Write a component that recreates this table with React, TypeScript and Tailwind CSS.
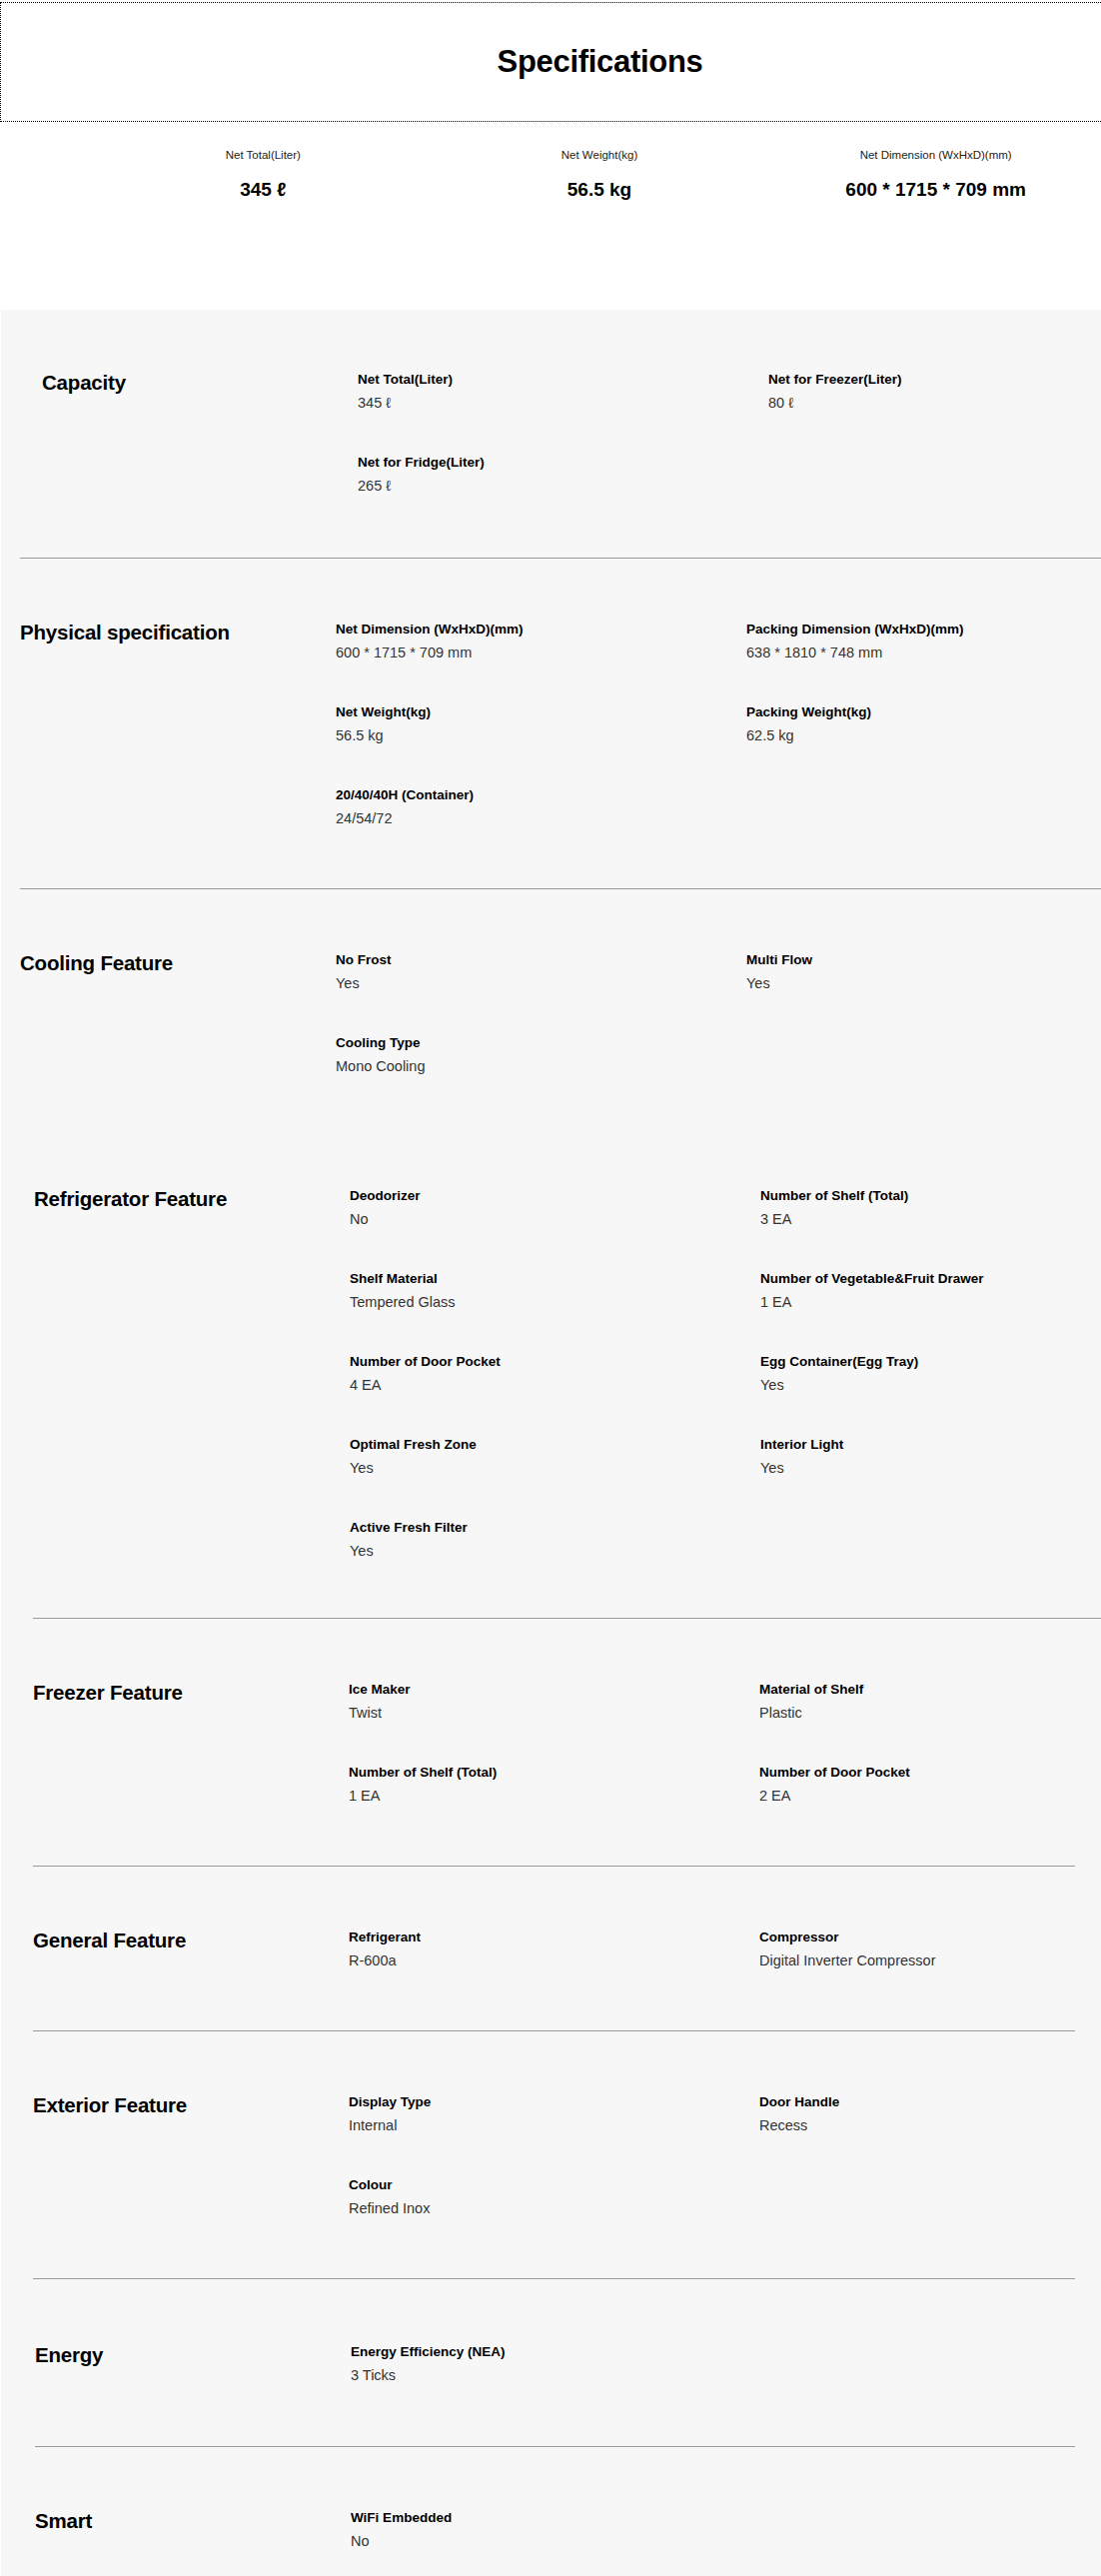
import React from 'react';

type Spec = [string, string];

type Section = {
  title: string;
  items: Spec[];
  wrap: string;
  line?: string;
};

const STATS: Spec[] = [
  ['Net Total(Liter)', '345 ℓ'],
  ['Net Weight(kg)', '56.5 kg'],
  ['Net Dimension (WxHxD)(mm)', '600 * 1715 * 709 mm'],
];

const SECTIONS: Section[] = [
  {
    title: 'Capacity',
    items: [
      ['Net Total(Liter)', '345 ℓ'],
      ['Net for Freezer(Liter)', '80 ℓ'],
      ['Net for Fridge(Liter)', '265 ℓ'],
    ],
    wrap: 'pl-[41px] pt-[60px] pb-[62px]',
    line: 'ml-[19px]',
  },
  {
    title: 'Physical specification',
    items: [
      ['Net Dimension (WxHxD)(mm)', '600 * 1715 * 709 mm'],
      ['Packing Dimension (WxHxD)(mm)', '638 * 1810 * 748 mm'],
      ['Net Weight(kg)', '56.5 kg'],
      ['Packing Weight(kg)', '62.5 kg'],
      ['20/40/40H (Container)', '24/54/72'],
    ],
    wrap: 'pl-[19px] pt-[61px] pb-[60px]',
    line: 'ml-[19px]',
  },
  {
    title: 'Cooling Feature',
    items: [
      ['No Frost', 'Yes'],
      ['Multi Flow', 'Yes'],
      ['Cooling Type', 'Mono Cooling'],
    ],
    wrap: 'pl-[19px] pt-[61px] pb-[60px]',
  },
  {
    title: 'Refrigerator Feature',
    items: [
      ['Deodorizer', 'No'],
      ['Number of Shelf (Total)', '3 EA'],
      ['Shelf Material', 'Tempered Glass'],
      ['Number of Vegetable&Fruit Drawer', '1 EA'],
      ['Number of Door Pocket', '4 EA'],
      ['Egg Container(Egg Tray)', 'Yes'],
      ['Optimal Fresh Zone', 'Yes'],
      ['Interior Light', 'Yes'],
      ['Active Fresh Filter', 'Yes'],
    ],
    wrap: 'pl-[33px] pt-[50px] pb-[57px]',
    line: 'ml-[32px]',
  },
  {
    title: 'Freezer Feature',
    items: [
      ['Ice Maker', 'Twist'],
      ['Material of Shelf', 'Plastic'],
      ['Number of Shelf (Total)', '1 EA'],
      ['Number of Door Pocket', '2 EA'],
    ],
    wrap: 'pl-[32px] pt-[61px] pb-[60px]',
    line: 'ml-[32px] mr-[26px]',
  },
  {
    title: 'General Feature',
    items: [
      ['Refrigerant', 'R-600a'],
      ['Compressor', 'Digital Inverter Compressor'],
    ],
    wrap: 'pl-[32px] pt-[61px] pb-[60px]',
    line: 'ml-[32px] mr-[26px]',
  },
  {
    title: 'Exterior Feature',
    items: [
      ['Display Type', 'Internal'],
      ['Door Handle', 'Recess'],
      ['Colour', 'Refined Inox'],
    ],
    wrap: 'pl-[32px] pt-[61px] pb-[60px]',
    line: 'ml-[32px] mr-[26px]',
  },
  {
    title: 'Energy',
    items: [['Energy Efficiency (NEA)', '3 Ticks']],
    wrap: 'pl-[34px] pt-[63px] pb-[61px]',
    line: 'ml-[34px] mr-[26px]',
  },
  {
    title: 'Smart',
    items: [['WiFi Embedded', 'No']],
    wrap: 'pl-[34px] pt-[61px] pb-[30px]',
  },
];

const SpecBlock = ({ section }: { section: Section }) => (
  <>
    <div className={`flex ${section.wrap}`}>
      <h3 className="w-[316px] shrink-0 text-[20.5px] leading-[26px] font-bold text-black tracking-[-0.2px]">
        {section.title}
      </h3>
      <div className="grid grid-cols-[411px_1fr] gap-y-[40px]">
        {section.items.map(([label, value]) => (
          <div key={label + value}>
            <div className="text-[13.5px] leading-[20px] font-bold text-black">{label}</div>
            <div className="mt-[3px] text-[14.5px] leading-[20px] text-[#333]">{value}</div>
          </div>
        ))}
      </div>
    </div>
    {section.line && <div className={`h-px bg-[#999] ${section.line}`} />}
  </>
);

const App = () => {
  return (
    <div className="flex min-h-screen flex-col overflow-hidden bg-white font-['Liberation_Sans',Arial,sans-serif] text-black">
      {/* Title box, wider than the window so its right edge is cut off */}
      <div className="mt-[2px] flex h-[120px] w-[1200px] shrink-0 items-center justify-center border-t border-b border-l border-dotted border-black">
        <h1 className="text-[31px] font-bold tracking-[-0.3px] text-black">Specifications</h1>
      </div>

      {/* Key figures */}
      <div className="h-[188px] shrink-0 pt-[25px]">
        <div className="ml-[95px] grid w-[1010px] grid-cols-3">
          {STATS.map(([label, value]) => (
            <div key={label} className="flex flex-col items-center">
              <span className="text-[11.5px] leading-[16px] text-[#222]">{label}</span>
              <span className="mt-[14px] text-[19px] leading-[26px] font-bold text-black">{value}</span>
            </div>
          ))}
        </div>
      </div>

      {/* Spec groups */}
      <div className="ml-px flex-1 bg-[#f7f7f7]">
        {SECTIONS.map((s) => (
          <SpecBlock key={s.title} section={s} />
        ))}
      </div>
    </div>
  );
};

export default App;
